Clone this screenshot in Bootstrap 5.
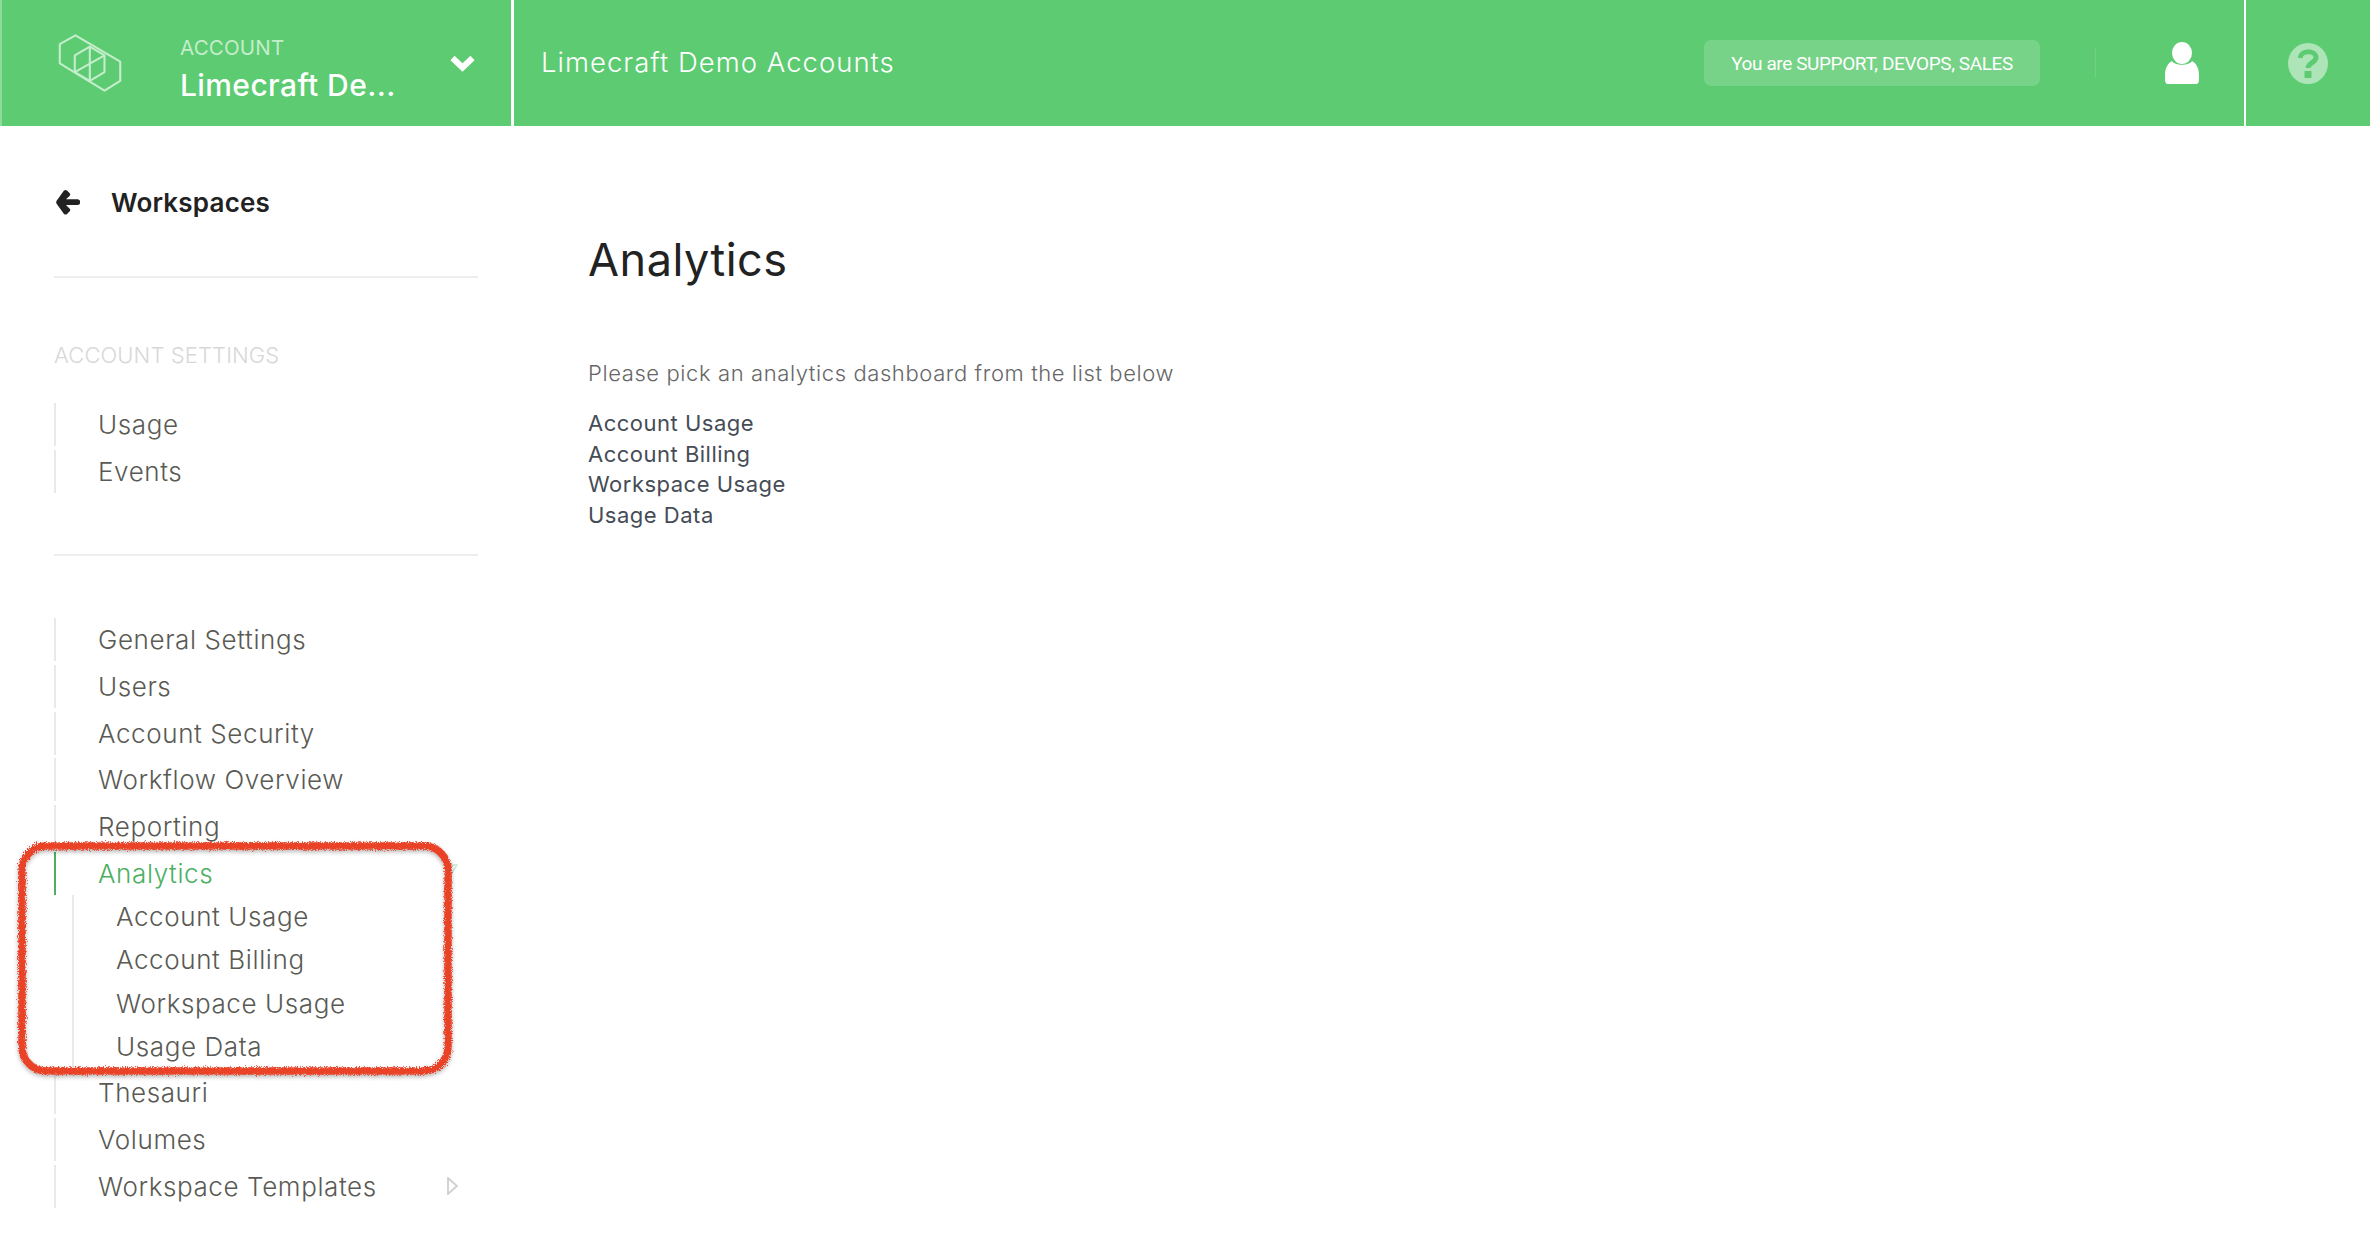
<!DOCTYPE html>
<html lang="en">
<head>
<meta charset="utf-8">
<title>Analytics</title>
<link href="https://cdn.jsdelivr.net/npm/bootstrap@5.3.0/dist/css/bootstrap.min.css" rel="stylesheet">
<style>
html,body{height:100%;}
body{font-family:"Inter","Open Sans","Liberation Sans",sans-serif;background:#fff;overflow:hidden;position:relative;}
.topbar{height:126px;background:#5ccb72;color:#fff;border-left:2px solid #8cdb9b;padding:0;}
.acct{width:512px;height:126px;border-right:3px solid #fff;padding-left:56px;padding-right:36px;}
.acct-text{margin-left:58px;flex:1;line-height:1;padding-top:12px;}
.acct-label{font-size:20.5px;color:#c4edcc;margin-bottom:12px;letter-spacing:.2px;}
.acct-name{font-size:30px;font-weight:500;letter-spacing:.4px;}
.top-title{font-size:27.5px;font-weight:300;padding-left:27px;letter-spacing:1px;}
.role-pill{width:336px;height:46px;background:#77d388;border-radius:7px;font-family:"Roboto",sans-serif;font-size:19px;font-weight:400;letter-spacing:-.4px;color:#fff;padding-top:2px;margin-right:1px;}
.thin-rule{width:1px;height:30px;background:#70d185;margin:0 69px 0 54px;}
.help-cell{width:126px;height:126px;border-left:2px solid #fff;margin-left:45px;}
.side{width:478px;padding:0 0 0 54px;flex:none;}
.back-row{height:152px;border-bottom:2px solid #eeeeee;padding-left:2px;padding-top:2px;}
.back-label{font-size:26px;font-weight:600;color:#222;margin-left:31px;letter-spacing:.2px;}
.side-head{font-size:22px;font-weight:300;color:#d8d8d8;margin:64px 0 0;line-height:26px;letter-spacing:.1px;}
.side-list{margin-top:35px;}
.side-link{display:block;height:43px;margin-bottom:3.7px;line-height:43px;padding-left:42px;border-left:2px solid #e9e9e9;color:#5a5a54;font-size:26px;font-weight:300;letter-spacing:.6px;text-decoration:none;position:relative;}
.side-link.on{color:#4caf63;border-left-color:#4caf63;margin-bottom:0;}
.side-gap{height:60px;border-bottom:2px solid #eeeeee;margin-bottom:62px;}
.sub-list{margin-left:18px;border-left:2px solid #e9e9e9;padding-bottom:3px;}
.sub-link{display:block;height:43.4px;line-height:43.4px;padding-left:42px;color:#5a5a54;font-size:26px;font-weight:300;letter-spacing:.6px;text-decoration:none;}
.side-arrow{position:absolute;right:20px;top:12px;}
.page-body{padding:0 0 0 110px;}
.page-title{font-size:45px;font-weight:400;color:#222;margin:99px 0 0;line-height:70px;letter-spacing:.5px;}
.page-intro{font-size:22px;font-weight:300;color:#666;margin:63px 0 0;line-height:30px;letter-spacing:.6px;}
.dash-list{margin-top:20px;}
.dash-link{display:block;font-size:22px;font-weight:400;color:#454c56;line-height:30.6px;text-decoration:none;letter-spacing:.5px;}
.scribble{position:absolute;left:12px;top:835px;pointer-events:none;}
</style>
</head>
<body>
<nav class="navbar topbar d-flex flex-nowrap align-items-center">
  <div class="acct d-flex align-items-center">
    <svg width="64" height="58" viewBox="163 106 181 166" fill="none" stroke="#c4edcc" stroke-width="6" stroke-linejoin="round"><path d="M212 110 340 185V240L295 268 167 190V135Z"/><path d="M253 142 295 167V215L253 240 210 215V167Z"/><path d="M253 142V240M210 215 295 167"/></svg>
    <div class="acct-text">
      <div class="acct-label">ACCOUNT</div>
      <div class="acct-name">Limecraft De...</div>
    </div>
    <svg width="25" height="18" viewBox="0 0 25 18" fill="none" stroke="#fff" stroke-width="6"><path d="M2.5 4 12.5 13.500 22.500 4"/></svg>
  </div>
  <div class="top-title flex-grow-1">Limecraft Demo Accounts</div>
  <div class="role-pill d-flex align-items-center justify-content-center">You are SUPPORT, DEVOPS, SALES</div>
  <div class="thin-rule"></div>
  <svg width="34" height="42" viewBox="0 0 34 42" fill="#fff"><ellipse cx="17" cy="11" rx="10" ry="11"/><path d="M7 19C10 24 24 24 27 19 31 21 34 26 34 33V38C34 40 33 42 31 42H3C1 42 0 40 0 38V33C0 26 3 21 7 19Z"/></svg>
  <div class="help-cell d-flex align-items-center justify-content-center">
    <svg width="40" height="41" viewBox="0 0 40 41"><ellipse cx="20" cy="20.500" rx="20" ry="20.500" fill="#aee5b8"/><path d="M12 15C13 7 27 7 28 14 28.500 20 20 19 20 25" fill="none" stroke="#5ccb72" stroke-width="5"/><rect x="16.500" y="28" width="7" height="7" fill="#5ccb72"/></svg>
  </div>
</nav>
<div class="d-flex">
  <aside class="side">
    <div class="back-row d-flex align-items-center">
      <svg width="24" height="26" viewBox="0 0 24 26" fill="#222"><path d="M11 1.500 13.500 4C14.500 5 14.500 6 13.500 7L10 10.300H21.500C23 10.300 24 11.300 24 12.500V14C24 15.200 23 16 21.500 16H10L13.500 19.500C14.500 20.500 14.500 21.500 13.500 22.500L11 25C10 25.700 9 25.700 8 25L0.800 15C0 14 0 12.500 0.800 11.500L8 1.500C9 0.700 10 0.700 11 1.500Z"/></svg>
      <span class="back-label">Workspaces</span>
    </div>
    <div class="side-head">ACCOUNT SETTINGS</div>
    <div class="nav flex-column flex-nowrap side-list">
      <a class="side-link" href="#">Usage</a>
      <a class="side-link" href="#">Events</a>
    </div>
    <div class="side-gap"></div>
    <div class="nav flex-column flex-nowrap">
      <a class="side-link" href="#">General Settings</a>
      <a class="side-link" href="#">Users</a>
      <a class="side-link" href="#">Account Security</a>
      <a class="side-link" href="#">Workflow Overview</a>
      <a class="side-link" href="#">Reporting</a>
      <a class="side-link on" href="#">Analytics<svg class="side-arrow" width="14" height="12" viewBox="0 0 14 12" fill="none" stroke="#c9ecd1" stroke-width="1.500"><path d="M1 1H13L7 10Z"/></svg></a>
      <div class="sub-list">
        <a class="sub-link" href="#">Account Usage</a>
        <a class="sub-link" href="#">Account Billing</a>
        <a class="sub-link" href="#">Workspace Usage</a>
        <a class="sub-link" href="#">Usage Data</a>
      </div>
      <a class="side-link" href="#">Thesauri</a>
      <a class="side-link" href="#">Volumes</a>
      <a class="side-link" href="#">Workspace Templates<svg class="side-arrow" width="11" height="18" viewBox="0 0 11 18" fill="none" stroke="#cfcfcf" stroke-width="1.800"><path d="M1 1 10 9 1 17Z"/></svg></a>
    </div>
  </aside>
  <main class="page-body flex-grow-1">
    <h1 class="page-title">Analytics</h1>
    <p class="page-intro">Please pick an analytics dashboard from the list below</p>
    <div class="dash-list">
      <a class="dash-link" href="#">Account Usage</a>
      <a class="dash-link" href="#">Account Billing</a>
      <a class="dash-link" href="#">Workspace Usage</a>
      <a class="dash-link" href="#">Usage Data</a>
    </div>
  </main>
</div>
<svg class="scribble" width="446" height="246" viewBox="0 0 446 246" fill="none">
  <defs>
    <filter id="rough" x="-5%" y="-5%" width="110%" height="110%">
      <feTurbulence type="fractalNoise" baseFrequency="0.9" numOctaves="3" seed="4" result="n"/>
      <feDisplacementMap in="SourceGraphic" in2="n" scale="6" result="d"/>
      <feDropShadow in="d" dx="0" dy="2" stdDeviation="2" flood-color="#000" flood-opacity=".3"/>
    </filter>
  </defs>
  <rect x="10" y="11" width="426" height="225" rx="24" stroke="#ea4327" stroke-width="7.500" filter="url(#rough)"/>
</svg>
<script src="https://cdn.jsdelivr.net/npm/bootstrap@5.3.0/dist/js/bootstrap.bundle.min.js"></script>
</body>
</html>
